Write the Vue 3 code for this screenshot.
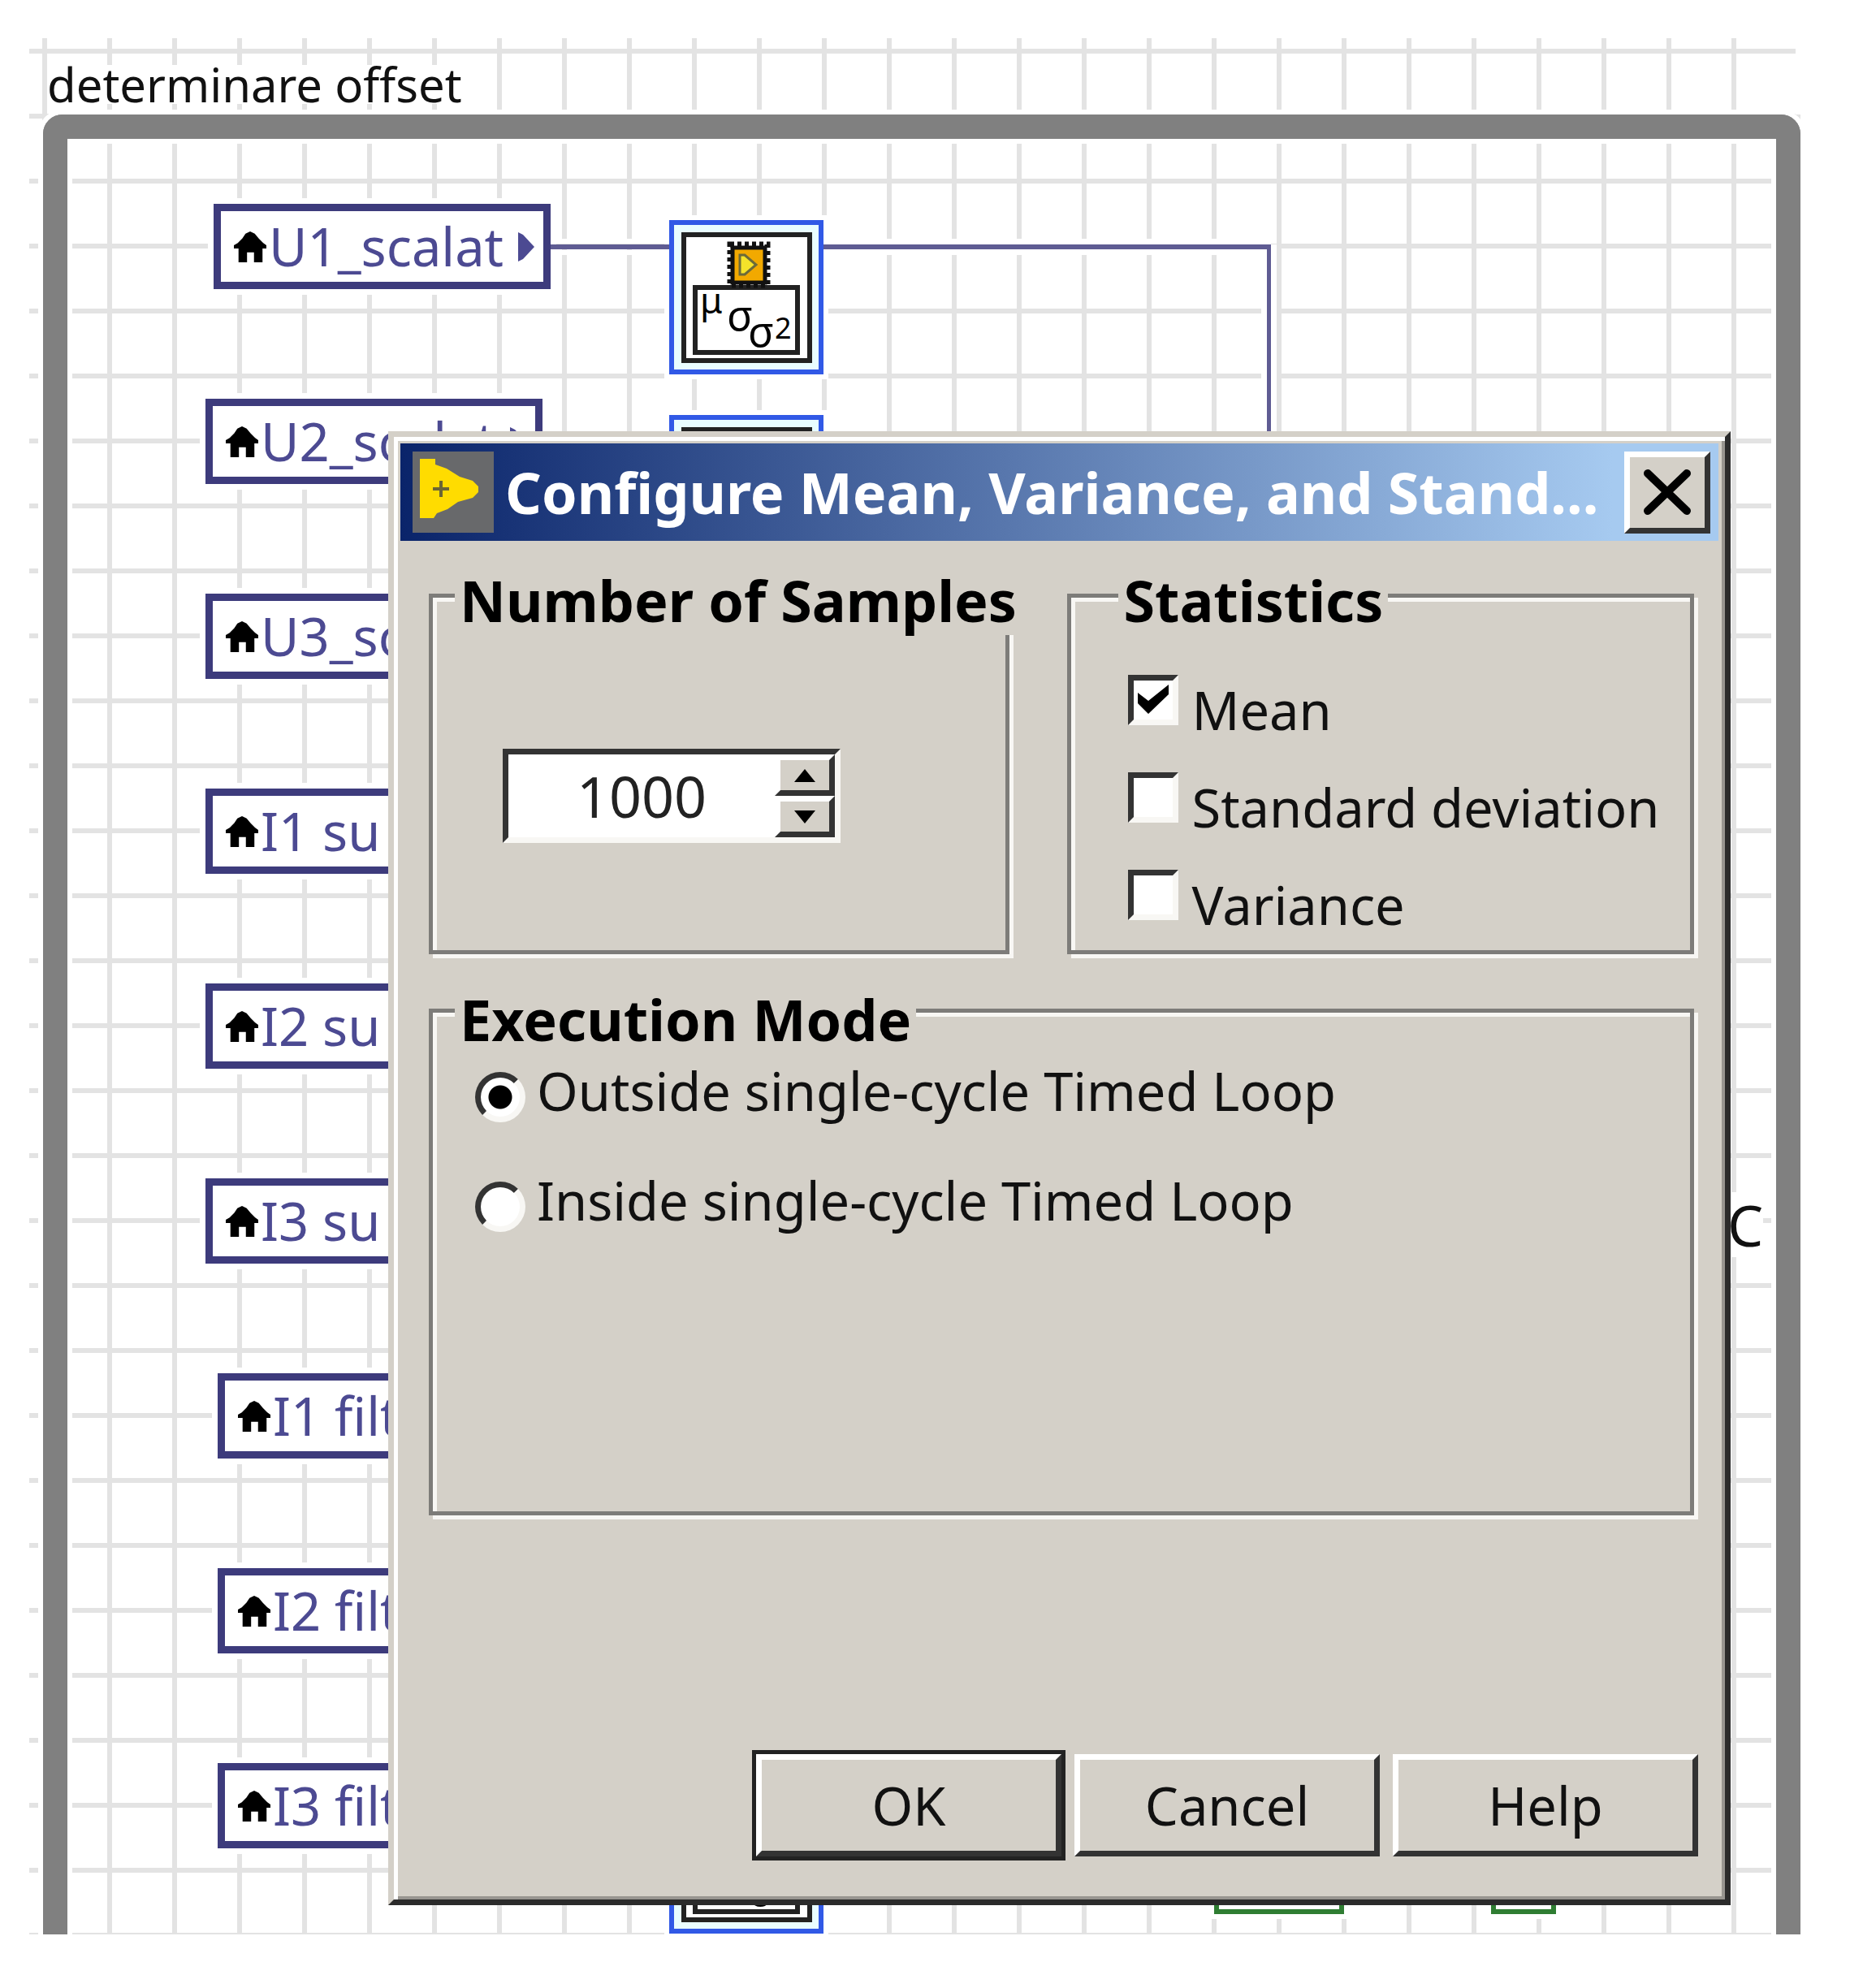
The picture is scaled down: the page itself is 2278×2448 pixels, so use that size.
<script setup>
import { ref } from 'vue';

const terminals = [
  { name: 'U1_scalat', x: 263, y: 251 },
  { name: 'U2_scalat', x: 253, y: 491 },
  { name: 'U3_scalat', x: 253, y: 731 },
  { name: 'I1 su', x: 253, y: 971 },
  { name: 'I2 su', x: 253, y: 1211 },
  { name: 'I3 su', x: 253, y: 1451 },
  { name: 'I1 filt', x: 268, y: 1691 },
  { name: 'I2 filt', x: 268, y: 1931 },
  { name: 'I3 filt', x: 268, y: 2171 }
];

const statNodes = [
  { x: 824, y: 271 },
  { x: 824, y: 511 },
  { x: 824, y: 2191 }
];

const samples = ref(1000);
const mode = ref('outside');

const statistics = ref([
  { id: 'mean', label: 'Mean', checked: true },
  { id: 'deviation', label: 'Standard deviation', checked: false },
  { id: 'variance', label: 'Variance', checked: false }
]);

const modes = [
  { id: 'outside', label: 'Outside single-cycle Timed Loop' },
  { id: 'inside', label: 'Inside single-cycle Timed Loop' }
];

const place = (item) => ({ left: item.x + 'px', top: item.y + 'px' });
</script>

<template>
  <div class="page">
    <main class="canvas">
      <span class="caption">determinare offset</span>
      <div class="loop-frame"></div>
    </main>

    <div v-for="terminal in terminals" :key="terminal.name" class="terminal" :style="place(terminal)">
      <svg class="house" viewBox="0 0 42 40">
        <path d="M21 0 L27 3 L32 9 L38 15 L42 18 V22 H37 V40 H26 V27 H17 V40 H6 V22 H0 V18 L5 15 L11 9 L15 3 Z" />
      </svg>
      <span>{{ terminal.name }}</span>
      <svg class="arrow" viewBox="0 0 20 36">
        <path d="M0 0 L6 3 L20 18 L6 33 L0 36 Z" />
      </svg>
    </div>

    <svg
      v-for="node in statNodes"
      :key="node.y"
      class="stat-node"
      :style="place(node)"
      viewBox="0 0 190 190"
    >
      <rect x="3" y="3" width="184" height="184" fill="#e9fdff" stroke="#3159e6" stroke-width="6" />
      <rect x="18" y="18" width="155" height="155" fill="#fff" stroke="#222" stroke-width="6" />
      <rect x="32" y="83" width="126" height="80" fill="#fff" stroke="#222" stroke-width="6" />
      <rect x="75" y="30" width="46" height="50" fill="none" stroke="#111" stroke-width="7" stroke-dasharray="5 4" />
      <rect x="78" y="34" width="40" height="43" fill="#f2a900" stroke="#111" stroke-width="5" />
      <path d="M87 43 L93 43 L107 55 L93 67 L87 67 Z" fill="#f5e32a" stroke="#6b6a3a" stroke-width="3" />
      <text x="38" y="115" font-size="44">μ</text>
      <text x="71" y="136" font-size="52">σ</text>
      <text x="97" y="156" font-size="52">σ</text>
      <text x="130" y="146" font-size="36">2</text>
    </svg>

    <div class="wire wire-in"></div>
    <div class="wire wire-out"></div>

    <div class="bool-node bool-wide"></div>
    <div class="bool-node bool-narrow"></div>
    <span class="constant">C</span>

    <section class="dialog">
      <header class="title-bar">
        <svg class="app-icon" viewBox="0 0 100 100">
          <rect width="100" height="100" fill="#68696b" />
          <path d="M9 9 H28 V16 L42 21 L58 31 L74 36 L81 43 V50 L74 57 L56 62 L43 71 L30 76 L26 82 H9 Z" fill="#ffdc00" />
          <path d="M25 46 H45 M35 36 V56" stroke="#6b6535" stroke-width="4" />
        </svg>
        <h1>Configure Mean, Variance, and Stand...</h1>
        <button class="close" aria-label="Close">
          <svg viewBox="0 0 60 56">
            <path d="M6 5 L54 51 M54 5 L6 51" stroke="#000" stroke-width="10" stroke-linecap="round" />
          </svg>
        </button>
      </header>

      <div class="groups">
        <fieldset class="samples">
          <legend>Number of Samples</legend>
          <div class="spinner">
            <input v-model="samples" type="text" aria-label="Number of Samples" />
            <div class="steps">
              <button aria-label="Increase" @click="samples++">
                <svg viewBox="0 0 26 16"><path d="M13 0 L26 16 H0 Z" /></svg>
              </button>
              <button aria-label="Decrease" @click="samples--">
                <svg viewBox="0 0 26 16"><path d="M0 0 H26 L13 16 Z" /></svg>
              </button>
            </div>
          </div>
        </fieldset>

        <fieldset class="statistics">
          <legend>Statistics</legend>
          <label v-for="item in statistics" :key="item.id" class="check">
            <span class="box">
              <input v-model="item.checked" type="checkbox" />
              <svg v-if="item.checked" viewBox="0 0 38 36">
                <path d="M0 10 L13 20 L38 0 V12 L13 36 L0 23 Z" />
              </svg>
            </span>
            {{ item.label }}
          </label>
        </fieldset>

        <fieldset class="execution">
          <legend>Execution Mode</legend>
          <label v-for="item in modes" :key="item.id" class="radio">
            <input v-model="mode" type="radio" name="mode" :value="item.id" />
            {{ item.label }}
          </label>
        </fieldset>
      </div>

      <footer>
        <button class="default">OK</button>
        <button>Cancel</button>
        <button>Help</button>
      </footer>
    </section>
  </div>
</template>

<style>
body {
  margin: 0;
  background: #fff;
}
</style>

<style scoped>
* {
  box-sizing: border-box;
}

.page {
  position: relative;
  display: flex;
  min-height: 100vh;
  padding: 47px 61px 66px 36px;
  overflow: hidden;
  font-family: 'Noto Sans', 'DejaVu Sans', sans-serif;
  font-size: 65px;
  color: #111;
}

.canvas {
  flex: 1;
  display: flex;
  flex-direction: column;
  align-items: flex-start;
  padding-top: 33px;
  overflow: hidden;
  background:
    linear-gradient(#fff, #fff) right top / 6px 94px no-repeat,
    linear-gradient(90deg, #e3e3e3 6px, transparent 6px) 16px 13px / 80px 80px,
    linear-gradient(#e3e3e3 6px, transparent 6px) 16px 13px / 80px 80px;
}

.caption {
  margin: 0 0 13px 22px;
  font-size: 58px;
  line-height: 48px;
  background: #fff;
}

.loop-frame {
  flex: 1;
  align-self: stretch;
  margin-left: 17px;
  border: 30px solid #808080;
  border-bottom: 0;
  border-radius: 24px 24px 0 0;
  box-shadow: 0 0 0 6px #fff, inset 0 6px 0 #fff, inset 6px 0 0 #fff, inset -6px 0 0 #fff;
}

.wire {
  position: absolute;
  top: 301px;
}

.wire-in {
  left: 678px;
  width: 146px;
  height: 6px;
  background: #5f5c93;
  box-shadow: 0 -7px 0 #fff, 0 7px 0 #fff;
}

.wire-out {
  left: 1014px;
  width: 551px;
  height: 240px;
  border: solid #5f5c93;
  border-width: 6px 5px 0 0;
  box-shadow: 0 -7px 0 #fff, 7px 0 0 #fff, inset 0 7px 0 #fff, inset -7px 0 0 #fff;
}

.terminal {
  position: absolute;
  display: flex;
  align-items: center;
  width: 415px;
  height: 105px;
  padding: 0 11px 0 16px;
  border: 9px solid #3d3b7c;
  background: #fff;
  box-shadow: 0 0 0 7px #fff;
  color: #4c4a92;
  line-height: 87px;
  white-space: nowrap;
}

.house {
  flex: none;
  width: 40px;
  height: 40px;
  margin-right: 3px;
}

.arrow {
  flex: none;
  width: 20px;
  height: 36px;
  margin-left: auto;
  fill: #4c4a92;
}

.stat-node {
  position: absolute;
  width: 190px;
  height: 190px;
  box-shadow: 0 0 0 6px #fff;
}

.bool-node {
  position: absolute;
  top: 2277px;
  height: 80px;
  border: 6px solid #2f7d32;
  background: #fff;
  box-shadow: 0 0 0 6px #fff;
}

.bool-wide {
  left: 1495px;
  width: 160px;
}

.bool-narrow {
  left: 1836px;
  width: 80px;
}

.constant {
  position: absolute;
  left: 2127px;
  top: 1468px;
  font-size: 70px;
  line-height: 80px;
  background: #fff;
}

.dialog {
  position: absolute;
  left: 478px;
  right: 147px;
  top: 531px;
  padding: 8px;
  border: 7px solid;
  border-color: #d4d0c8 #2b2b2b #2b2b2b #d4d0c8;
  background: #d4d0c8;
  box-shadow: inset 5px 5px 0 #fff, inset -4px -4px 0 #989590;
}

.title-bar {
  display: flex;
  align-items: center;
  height: 120px;
  padding: 0 10px 0 15px;
  background: linear-gradient(90deg, #0a246a, #a6caf0 92%);
  color: #fff;
}

.app-icon {
  flex: none;
  width: 100px;
  height: 100px;
}

h1 {
  flex: 1;
  min-width: 0;
  margin: 0 0 0 14px;
  font-size: 70px;
  line-height: 98px;
  white-space: nowrap;
}

button {
  padding: 0;
  border: 7px solid;
  border-color: #fff #333 #333 #fff;
  background: #d4d0c8;
  color: #111;
  font: inherit;
}

.close {
  display: grid;
  place-items: center;
  flex: none;
  width: 106px;
  height: 101px;
}

.close svg {
  width: 60px;
  height: 56px;
}

.groups {
  display: grid;
  grid-template-columns: 715fr 771fr;
  gap: 16px 71px;
  padding: 18px 30px 0 35px;
}

fieldset {
  min-width: 0;
  min-height: 491px;
  margin: 0;
  padding: 0 0 0 27px;
  border: 5px solid #7d7c79;
  box-shadow: 5px 5px 0 #f8f7f4, inset 5px 5px 0 #f8f7f4;
}

legend {
  padding: 12px 6px 0;
  background: #d4d0c8;
  color: #000;
  font-size: 70px;
  font-weight: bold;
  line-height: 86px;
  white-space: nowrap;
}

.spinner {
  display: flex;
  width: 416px;
  height: 116px;
  margin: 140px 0 0 59px;
  border: 7px solid;
  border-color: #333 #f8f7f4 #f8f7f4 #333;
  background: #fff;
}

.spinner input {
  flex: 1;
  min-width: 0;
  padding: 0;
  border: 0;
  background: none;
  color: #222;
  font: inherit;
  font-size: 70px;
  text-align: center;
}

.steps {
  display: flex;
  flex-direction: column;
  width: 74px;
}

.steps button {
  display: grid;
  place-items: center;
  flex: 1;
}

.steps svg {
  width: 26px;
  height: 16px;
}

.statistics {
  padding-left: 58px;
}

.statistics legend {
  margin-bottom: 47px;
}

.check,
.radio {
  display: flex;
  line-height: 90px;
}

.check {
  align-items: baseline;
  gap: 16px;
  margin-left: 12px;
}

.check + .check {
  margin-top: 30px;
}

.box {
  position: relative;
  display: block;
  line-height: 0;
}

.check input,
.radio input {
  flex: none;
  appearance: none;
  width: 62px;
  height: 62px;
  margin: 0 0 6px;
  border: 7px solid;
  border-color: #333 #f8f7f4 #f8f7f4 #333;
  background: #fff;
}

.box svg {
  position: absolute;
  left: 12px;
  top: 12px;
  width: 38px;
  height: 36px;
}

.execution {
  grid-column: span 2;
  min-height: 675px;
}

.execution legend {
  padding-top: 21px;
}

.radio {
  align-items: flex-end;
  gap: 14px;
  margin: 0 0 45px 25px;
}

.radio input {
  border-radius: 50%;
}

.radio input:checked {
  background: radial-gradient(circle, #000 14px, #fff 15px);
}

footer {
  display: flex;
  justify-content: flex-end;
  gap: 16px;
  padding: 294px 25px 45px;
}

footer button {
  width: 376px;
  height: 126px;
}

.default {
  box-shadow: 0 0 0 5px #222;
}
</style>
